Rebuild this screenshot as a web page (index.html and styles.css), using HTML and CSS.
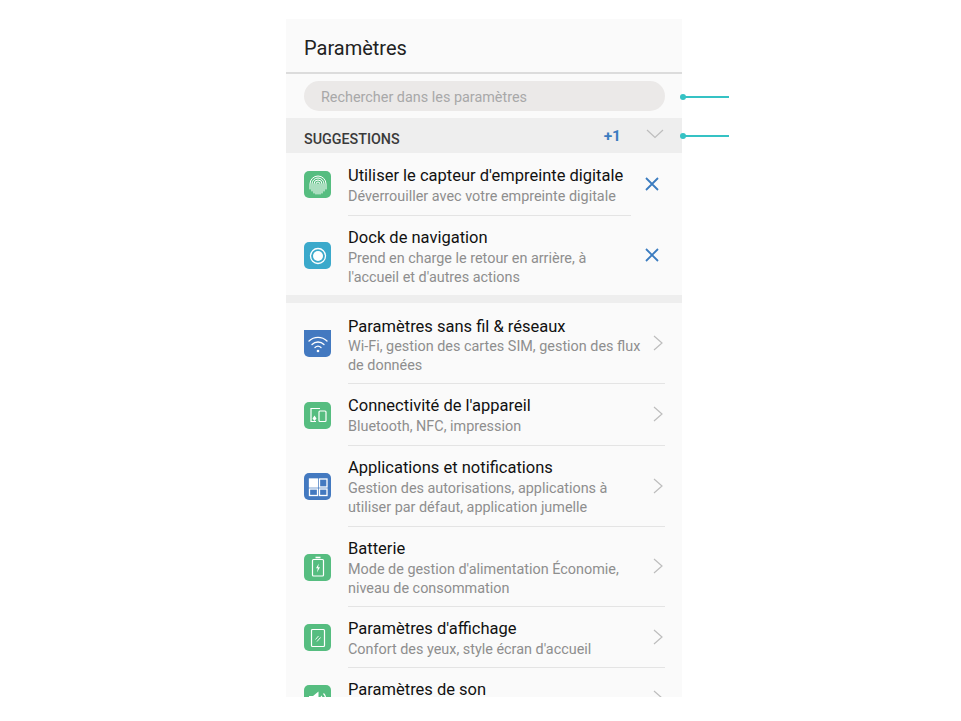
FILE: index.html
```html
<!DOCTYPE html>
<html>
<head>
	<title>Paramètres</title>
	<meta charset="utf-8">
	<link rel="stylesheet" href="styles.css">
</head>
<body>

	<div class="phone">
		<h1 class="title">Paramètres</h1>

		<div class="search-wrap">
			<div class="search">Rechercher dans les paramètres</div>
		</div>

		<div class="suggest-head">
			<span class="suggest-label">SUGGESTIONS</span>
			<span class="suggest-count">+1</span>
			<svg class="suggest-arrow" width="18" height="10" viewBox="0 0 18 10"><path d="M1 1l8 7.5L17 1" fill="none" stroke="#bdbdbd" stroke-width="1.2"/></svg>
		</div>

		<div class="row h63">
			<div class="icon green">
				<svg width="22" height="22" viewBox="0 0 22 22" fill="none" stroke="#fff" stroke-width="1" stroke-linecap="round">
					<path d="M3 15V10a8 8 0 0 1 16 0v5"/>
					<path d="M5 17V10a6 6 0 0 1 12 0v7"/>
					<path d="M7 19V10a4 4 0 0 1 8 0v9"/>
					<path d="M9 20V10a2 2 0 0 1 4 0v10"/>
					<path d="M11 20V10"/>
				</svg>
			</div>
			<div class="body short">
				<div class="text">
					<div class="name">Utiliser le capteur d'empreinte digitale</div>
					<div class="desc">Déverrouiller avec votre empreinte digitale</div>
				</div>
			</div>
			<svg class="close" width="16" height="16" viewBox="0 0 16 16"><path d="M2 2l12 12M14 2L2 14" stroke="#3b7cc0" stroke-width="1.8" fill="none"/></svg>
		</div>

		<div class="row h79">
			<div class="icon teal">
				<svg width="20" height="20" viewBox="0 0 20 20"><circle cx="10" cy="10" r="7.500" fill="none" stroke="#fff" stroke-width="1.300"/><circle cx="10" cy="10" r="5" fill="#fff"/></svg>
			</div>
			<div class="body short no-line">
				<div class="text">
					<div class="name">Dock de navigation</div>
					<div class="desc">Prend en charge le retour en arrière, à<br>l'accueil et d'autres actions</div>
				</div>
			</div>
			<svg class="close" width="16" height="16" viewBox="0 0 16 16"><path d="M2 2l12 12M14 2L2 14" stroke="#3b7cc0" stroke-width="1.8" fill="none"/></svg>
		</div>

		<div class="band"></div>

		<div class="row h81">
			<div class="icon blue icon-cut">
				<svg width="22" height="22" viewBox="0 0 22 22" fill="none" stroke="#fff" stroke-width="1.300" stroke-linecap="round">
					<path d="M2 8a13 13 0 0 1 18 0"/>
					<path d="M5 11.500a8.500 8.500 0 0 1 12 0"/>
					<path d="M8 14.500a4.500 4.500 0 0 1 6 0"/>
					<circle cx="11" cy="18" r="1.300" fill="#fff" stroke="none"/>
				</svg>
			</div>
			<div class="body">
				<div class="text text-cut">
					<div class="name name-cut">Paramètres sans fil &amp; réseaux</div>
					<div class="desc desc-cut">Wi-Fi, gestion des cartes SIM, gestion des flux<br>de données</div>
				</div>
				<svg class="chevron" width="10" height="16" viewBox="0 0 10 16"><path d="M1 1l8 7-8 7" fill="none" stroke="#bdbdbd" stroke-width="1.200"/></svg>
			</div>
		</div>

		<div class="row h62">
			<div class="icon green">
				<svg width="22" height="22" viewBox="0 0 22 22" fill="none" stroke="#fff" stroke-width="1.200">
					<path d="M13 4.500H4v13h5"/>
					<rect x="12" y="7" width="7" height="10.500" rx="1"/>
					<path d="M7.500 11.500l2 3-2 2.500-2-2.500z" fill="#fff" stroke="none"/>
				</svg>
			</div>
			<div class="body">
				<div class="text">
					<div class="name">Connectivité de l'appareil</div>
					<div class="desc">Bluetooth, NFC, impression</div>
				</div>
				<svg class="chevron" width="10" height="16" viewBox="0 0 10 16"><path d="M1 1l8 7-8 7" fill="none" stroke="#bdbdbd" stroke-width="1.200"/></svg>
			</div>
		</div>

		<div class="row h81">
			<div class="icon blue">
				<svg width="22" height="22" viewBox="0 0 22 22" fill="none" stroke="#fff" stroke-width="1.300">
					<rect x="2.500" y="3" width="8" height="8" fill="#fff"/>
					<rect x="12.500" y="3" width="7.500" height="8"/>
					<rect x="2.500" y="13" width="8" height="6.500"/>
					<rect x="12.500" y="13" width="7.500" height="6.500"/>
				</svg>
			</div>
			<div class="body">
				<div class="text">
					<div class="name">Applications et notifications</div>
					<div class="desc">Gestion des autorisations, applications à<br>utiliser par défaut, application jumelle</div>
				</div>
				<svg class="chevron" width="10" height="16" viewBox="0 0 10 16"><path d="M1 1l8 7-8 7" fill="none" stroke="#bdbdbd" stroke-width="1.200"/></svg>
			</div>
		</div>

		<div class="row h80">
			<div class="icon green">
				<svg width="22" height="22" viewBox="0 0 22 22" fill="none" stroke="#fff" stroke-width="1.200">
					<path d="M8.500 1.500h5" stroke-width="1.600"/>
					<rect x="5.500" y="3.500" width="11" height="16.500" rx="1"/>
					<path d="M11.800 7.500L9 12.300h1.800L10 16.500l3-5.200h-1.900z" fill="#fff" stroke="none"/>
				</svg>
			</div>
			<div class="body">
				<div class="text">
					<div class="name">Batterie</div>
					<div class="desc">Mode de gestion d'alimentation Économie,<br>niveau de consommation</div>
				</div>
				<svg class="chevron" width="10" height="16" viewBox="0 0 10 16"><path d="M1 1l8 7-8 7" fill="none" stroke="#bdbdbd" stroke-width="1.200"/></svg>
			</div>
		</div>

		<div class="row h61">
			<div class="icon green">
				<svg width="22" height="22" viewBox="0 0 22 22" fill="none" stroke="#fff" stroke-width="1.200">
					<rect x="4.500" y="2.500" width="13" height="17" rx="1"/>
					<path d="M8.500 12.500l3-3.500M10 14.500l3.500-4" stroke-width=".9"/>
				</svg>
			</div>
			<div class="body">
				<div class="text">
					<div class="name">Paramètres d'affichage</div>
					<div class="desc">Confort des yeux, style écran d'accueil</div>
				</div>
				<svg class="chevron" width="10" height="16" viewBox="0 0 10 16"><path d="M1 1l8 7-8 7" fill="none" stroke="#bdbdbd" stroke-width="1.200"/></svg>
			</div>
		</div>

		<div class="row h61">
			<div class="icon green">
				<svg width="22" height="22" viewBox="0 0 22 22" fill="none" stroke="#fff" stroke-width="1.200">
					<path d="M2 8h4l5.500-4.500v15L6 14H2z" fill="#fff" stroke="none"/>
					<path d="M14 8a4.500 4.500 0 0 1 0 6M16.500 5.500a8 8 0 0 1 0 11"/>
				</svg>
			</div>
			<div class="body no-line">
				<div class="text text-top">
					<div class="name">Paramètres de son</div>
				</div>
				<svg class="chevron" width="10" height="16" viewBox="0 0 10 16"><path d="M1 1l8 7-8 7" fill="none" stroke="#bdbdbd" stroke-width="1.200"/></svg>
			</div>
		</div>
	</div>

	<!-- callout lines over the screenshot -->
	<div class="callout callout-1"></div>
	<div class="callout callout-2"></div>

</body>
</html>
```

FILE: styles.css
```css
*, *:before, *:after { box-sizing: border-box; }

body { margin: 0; background-color: #fff; font-family: Roboto, "Liberation Sans", sans-serif; }

.phone { width: 396px; height: 678px; margin: 19px 0 0 286px; background-color: #fafafa; overflow: hidden; }

.title { height: 55px; margin: 0; padding: 17px 18px 0 18px; font-size: 20px; line-height: 24px; font-weight: 400; color: #222; border-bottom: 2px solid #dcdcdc; }

.search-wrap { height: 44px; padding: 7px 17px 0 18px; }
.search { height: 30px; padding-left: 17px; border-radius: 15px; background-color: #ebe9e8; color: #a8a8a8; font-size: 14.4px; line-height: 33px; }

.suggest-head { height: 35px; display: flex; align-items: center; padding: 0 18px; background-color: #eeeeee; }
.suggest-label { flex: 1; font-size: 14.3px; font-weight: 500; color: #3a3a3a; padding-top: 7px; }
.suggest-count { font-size: 15.5px; font-weight: 700; color: #3b7cc0; margin-right: 25px; }
.suggest-arrow { margin-right: 0; margin-top: -4px; }

.row { display: flex; align-items: center; padding: 0 17px 0 18px; }
.h61 { height: 61px; }
.h62 { height: 62px; }
.h63 { height: 63px; }
.h79 { height: 79px; }
.h80 { height: 80px; }
.h81 { height: 81px; }

.body { align-self: stretch; flex: 1; min-width: 0; display: flex; align-items: center; margin-left: 17px; border-bottom: 1px solid #e4e4e4; }
.no-line { border-bottom: none; }

.text { flex: 1; min-width: 0; padding-top: 3px; white-space: nowrap; }
.text-cut { padding-top: 5px; }
.text-top { align-self: flex-start; padding-top: 12px; }

.icon { width: 27px; height: 27px; flex: none; border-radius: 5px; display: flex; align-items: center; justify-content: center; }
.icon-cut { border-radius: 0 0 5px 5px; }
.green { background-color: #56bd80; }
.teal { background-color: #3ba9cb; }
.blue { background-color: #4379c0; }

.name { font-size: 16.5px; line-height: 20px; color: #111; }
.desc { font-size: 14.4px; line-height: 19px; color: #8e8e8e; margin-top: 1px; }

.name-cut { height: 17px; overflow: hidden; }
.desc-cut { margin-top: 3px; }

.close { flex: none; margin: -1px 5px 0 13px; }
.chevron { flex: none; margin: -1px 2px 0 0; }

.band { height: 8px; background-color: #eeeeee; }

.callout { position: absolute; left: 682px; width: 47px; height: 2px; background-color: #35c2c4; }
.callout:before { content: ""; position: absolute; left: -2px; top: -2px; width: 6px; height: 6px; border-radius: 50%; background-color: #35c2c4; }
.callout-1 { top: 96px; }
.callout-2 { top: 135px; }
```
